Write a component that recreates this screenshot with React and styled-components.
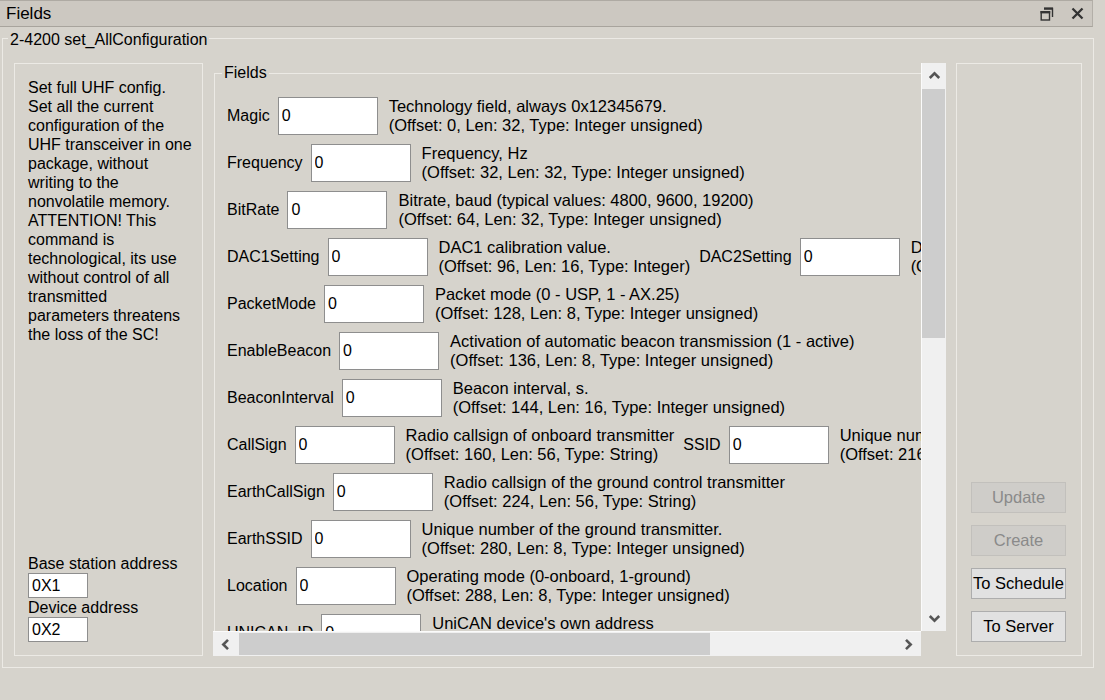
import React from "react";
import styled, { createGlobalStyle } from "styled-components";

const BG = "#d6d3cc";
const ETCH = "#eceae5";

const GlobalStyle = createGlobalStyle`
  html, body {
    margin: 0;
    padding: 0;
    background: ${BG};
  }
  body {
    font-family: "Liberation Sans", Arial, sans-serif;
    font-size: 16px;
    color: #000;
  }
`;

const rows = [
  [
    {
      label: "Magic",
      desc: ["Technology field, always 0x12345679.", "(Offset: 0, Len: 32, Type: Integer unsigned)"],
    },
  ],
  [{ label: "Frequency", desc: ["Frequency, Hz", "(Offset: 32, Len: 32, Type: Integer unsigned)"] }],
  [
    {
      label: "BitRate",
      desc: ["Bitrate, baud (typical values: 4800, 9600, 19200)", "(Offset: 64, Len: 32, Type: Integer unsigned)"],
    },
  ],
  [
    { label: "DAC1Setting", desc: ["DAC1 calibration value.", "(Offset: 96, Len: 16, Type: Integer)"] },
    { label: "DAC2Setting", desc: ["DAC2 calibration value.", "(Offset: 112, Len: 16, Type: Integer)"] },
  ],
  [{ label: "PacketMode", desc: ["Packet mode (0 - USP, 1 - AX.25)", "(Offset: 128, Len: 8, Type: Integer unsigned)"] }],
  [
    {
      label: "EnableBeacon",
      desc: ["Activation of automatic beacon transmission (1 - active)", "(Offset: 136, Len: 8, Type: Integer unsigned)"],
    },
  ],
  [{ label: "BeaconInterval", desc: ["Beacon interval, s.", "(Offset: 144, Len: 16, Type: Integer unsigned)"] }],
  [
    { label: "CallSign", desc: ["Radio callsign of onboard transmitter", "(Offset: 160, Len: 56, Type: String)"] },
    {
      label: "SSID",
      desc: ["Unique number of the onboard transmitter.", "(Offset: 216, Len: 8, Type: Integer unsigned)"],
    },
  ],
  [
    {
      label: "EarthCallSign",
      desc: ["Radio callsign of the ground control transmitter", "(Offset: 224, Len: 56, Type: String)"],
    },
  ],
  [
    {
      label: "EarthSSID",
      desc: ["Unique number of the ground transmitter.", "(Offset: 280, Len: 8, Type: Integer unsigned)"],
    },
  ],
  [
    {
      label: "Location",
      desc: ["Operating mode (0-onboard, 1-ground)", "(Offset: 288, Len: 8, Type: Integer unsigned)"],
    },
  ],
  [{ label: "UNICAN_ID", desc: ["UniCAN device's own address", "(Offset: 296, Len: 8, Type: Integer unsigned)"] }],
];

const infoLines = [
  "Set full UHF config.",
  "Set all the current",
  "configuration of the",
  "UHF transceiver in one",
  "package, without",
  "writing to the",
  "nonvolatile memory.",
  "ATTENTION! This",
  "command is",
  "technological, its use",
  "without control of all",
  "transmitted",
  "parameters threatens",
  "the loss of the SC!",
];

const Chevron = ({ dir }) => {
  const rot = { up: 0, right: 90, down: 180, left: 270 }[dir];
  return (
    <svg width="13" height="13" viewBox="0 0 13 13" style={{ transform: `rotate(${rot}deg)` }}>
      <polyline points="1.8,9 6.5,4.3 11.2,9" fill="none" stroke="#555" strokeWidth="2.6" />
    </svg>
  );
};

const RestoreIcon = () => (
  <svg width="14" height="14" viewBox="0 0 14 14">
    <path d="M4 1.5h8.5v8.5" fill="none" stroke="#333" strokeWidth="1.4" />
    <rect x="4" y="0.5" width="9" height="2.2" fill="#333" />
    <rect x="1.2" y="4.7" width="8.3" height="8.3" fill="none" stroke="#333" strokeWidth="1.4" />
    <rect x="0.5" y="4" width="9.7" height="2.4" fill="#333" />
  </svg>
);

const CloseIcon = () => (
  <svg width="13" height="13" viewBox="0 0 13 13">
    <path d="M1.5 1.5l10 10M11.5 1.5l-10 10" stroke="#333" strokeWidth="2.3" />
  </svg>
);

const FieldItem = ({ label, desc }) => (
  <Item>
    <Label>{label}</Label>
    <FieldInput defaultValue="0" />
    <Desc>
      {desc[0]}
      <br />
      {desc[1]}
    </Desc>
  </Item>
);

const App = () => (
  <Window>
    <GlobalStyle />
    <TitleBar>
      <Title>Fields</Title>
      <TitleButtons>
        <RestoreIcon />
        <CloseIcon />
      </TitleButtons>
    </TitleBar>

    <Group>
      <Caption>2-4200 set_AllConfiguration</Caption>

      <LeftPanel>
        <Info>
          {infoLines.map((line) => (
            <div key={line}>{line}</div>
          ))}
        </Info>
        <Address>
          <span>Base station address</span>
          <SmallInput defaultValue="0X1" />
          <span>Device address</span>
          <SmallInput defaultValue="0X2" />
        </Address>
      </LeftPanel>

      <Middle>
        <Viewport>
          <FieldsBox>
            <FieldsCaption>Fields</FieldsCaption>
            {rows.map((row, i) => (
              <Row key={i}>
                {row.map((f) => (
                  <FieldItem key={f.label} {...f} />
                ))}
              </Row>
            ))}
          </FieldsBox>
        </Viewport>
        <VScroll>
          <ArrowCell>
            <Chevron dir="up" />
          </ArrowCell>
          <VThumb />
          <Spacer />
          <ArrowCell>
            <Chevron dir="down" />
          </ArrowCell>
        </VScroll>
        <HScroll>
          <ArrowCell>
            <Chevron dir="left" />
          </ArrowCell>
          <HThumb />
          <Spacer />
          <ArrowCell>
            <Chevron dir="right" />
          </ArrowCell>
        </HScroll>
      </Middle>

      <RightPanel>
        <Button disabled>Update</Button>
        <Button disabled>Create</Button>
        <Button>To Schedule</Button>
        <Button>To Server</Button>
      </RightPanel>
    </Group>
  </Window>
);

const Window = styled.div`
  width: 1105px;
  height: 700px;
  overflow: hidden;
`;

const TitleBar = styled.div`
  box-sizing: border-box;
  width: 1093px;
  height: 27px;
  display: flex;
  align-items: center;
  padding: 0 8px 0 6px;
  background: #ccc8c1;
  border-top: 1px solid #aeaaa3;
  border-bottom: 1px solid #a8a49d;
  border-right: 1px solid #b3afa8;
  font-size: 17px;
`;

const Title = styled.div`
  flex: 1;
`;

const TitleButtons = styled.div`
  display: flex;
  align-items: center;
  gap: 17px;
`;

const Group = styled.div`
  position: relative;
  box-sizing: border-box;
  width: 1092px;
  height: 630px;
  margin: 11px 0 0 2px;
  padding: 24px 11px 11px 11px;
  border: 1px solid ${ETCH};
  display: flex;
  gap: 10px;
`;

const Caption = styled.div`
  position: absolute;
  top: -9px;
  left: 5px;
  padding: 0 2px;
  line-height: 20px;
  background: ${BG};
`;

const Panel = styled.div`
  box-sizing: border-box;
  border: 1px solid ${ETCH};
  flex: none;
`;

const LeftPanel = styled(Panel)`
  width: 189px;
  display: flex;
  flex-direction: column;
  justify-content: space-between;
  padding: 14px 4px 13px 13px;
  white-space: nowrap;
`;

const Info = styled.div`
  line-height: 19px;
`;

const Address = styled.div`
  display: flex;
  flex-direction: column;
  align-items: flex-start;
  line-height: 19px;
`;

const InputBase = styled.input`
  box-sizing: border-box;
  border: 1px solid #8e8e8e;
  background: #fff;
  font: inherit;
  color: #000;
  padding: 0 3px;
  margin: 0;
  outline: none;
`;

const SmallInput = styled(InputBase)`
  width: 60px;
  height: 25px;
`;

const Middle = styled.div`
  flex: 1;
  min-width: 0;
  display: grid;
  grid-template-columns: 1fr 25px;
  grid-template-rows: 1fr 25px;
`;

const Viewport = styled.div`
  overflow: hidden;
  min-width: 0;
  min-height: 0;
`;

const FieldsBox = styled.div`
  position: relative;
  width: max-content;
  margin: 10px 0 0 1px;
  padding: 23px 40px 20px 12px;
  border: 1px solid ${ETCH};
  display: flex;
  flex-direction: column;
  gap: 9px;
`;

const FieldsCaption = styled.div`
  position: absolute;
  top: -11px;
  left: 7px;
  padding: 0 2px;
  line-height: 20px;
  background: ${BG};
`;

const Row = styled.div`
  display: flex;
  align-items: center;
  gap: 9px;
  white-space: nowrap;
`;

const Item = styled.div`
  display: flex;
  align-items: center;
`;

const Label = styled.span`
  margin-right: 8px;
`;

const FieldInput = styled(InputBase)`
  width: 100px;
  height: 38px;
  flex: none;
`;

const Desc = styled.div`
  margin-left: 11px;
  line-height: 19px;
  font-size: 16.5px;
`;

const ScrollBar = styled.div`
  background: #f0f0f0;
  display: flex;
`;

const VScroll = styled(ScrollBar)`
  flex-direction: column;
  border-left: 1px solid #fbfbfb;
`;

const HScroll = styled(ScrollBar)`
  flex-direction: row;
  border-top: 1px solid #fbfbfb;
`;

const ArrowCell = styled.div`
  flex: none;
  width: 25px;
  height: 25px;
  display: flex;
  align-items: center;
  justify-content: center;
  align-self: center;
`;

const VThumb = styled.div`
  height: 249px;
  margin: 1px 1px 0 0;
  background: #cdcdcd;
`;

const HThumb = styled.div`
  width: 471px;
  margin: 1px 0 1px 1px;
  background: #cdcdcd;
`;

const Spacer = styled.div`
  flex: 1;
`;

const RightPanel = styled(Panel)`
  width: 126px;
  display: flex;
  flex-direction: column;
  justify-content: flex-end;
  gap: 12px;
  padding: 0 0 13px 14px;
`;

const Button = styled.button`
  box-sizing: border-box;
  width: 95px;
  height: 31px;
  padding: 0;
  font: inherit;
  font-size: 16.5px;
  color: ${(p) => (p.disabled ? "#8a8a8a" : "#000")};
  background: ${(p) => (p.disabled ? "#cfcdc9" : "#e1e1e1")};
  border: 1px solid ${(p) => (p.disabled ? "#c2c0bc" : "#adadad")};
`;

export default App;
